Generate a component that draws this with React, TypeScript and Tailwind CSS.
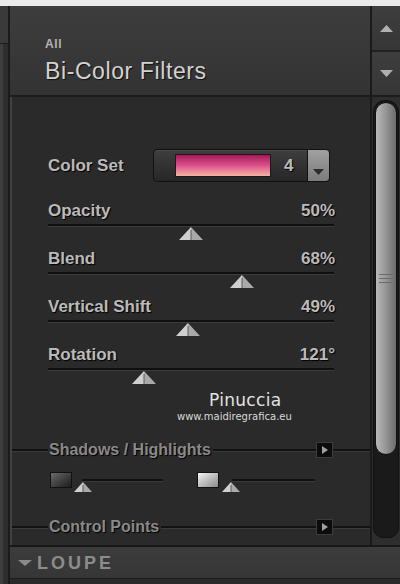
import React from "react";

const sliders = [
  { label: "Opacity", value: 50, max: 100, text: "50%" },
  { label: "Blend", value: 68, max: 100, text: "68%" },
  { label: "Vertical Shift", value: 49, max: 100, text: "49%" },
  { label: "Rotation", value: 121, max: 360, text: "121°" },
];

const TRACK = 286;

function Thumb({ w = 24, h = 13 }: { w?: number; h?: number }) {
  const c = w / 2;
  return (
    <svg width={w} height={h} viewBox={`0 0 ${w} ${h}`}>
      <polygon points={`${c},0 ${c},${h} 0,${h}`} fill="#cfcfcf" />
      <polygon points={`${c},0 ${w},${h} ${c},${h}`} fill="#a9a9a9" />
      <line x1={c} y1={3} x2={c} y2={h} stroke="#5a5a5a" strokeWidth={1} />
    </svg>
  );
}

function SectionButton() {
  return (
    <div className="w-[17px] h-[16px] bg-[#0c0c0c] border border-[#3c3c3c] flex items-center justify-center">
      <svg width="6" height="8" viewBox="0 0 6 8">
        <polygon points="0,0 6,4 0,8" fill="#a0a0a0" />
      </svg>
    </div>
  );
}

function SectionHeader({ title }: { title: string }) {
  return (
    <div className="flex items-center h-[18px]">
      <div className="w-[36px] h-[2px] bg-[#121212] shadow-[0_1px_0_#3a3a3a]" />
      <span className="ml-[1px] text-[16px] leading-[18px] font-bold text-[#898989] [text-shadow:1px_1px_1px_#000] whitespace-nowrap">
        {title}
      </span>
      <div className="flex-1 ml-[2px] h-[2px] bg-[#121212] shadow-[0_1px_0_#3a3a3a]" />
      <SectionButton />
      <div className="w-[37px] h-[2px] bg-[#121212] shadow-[0_1px_0_#3a3a3a]" />
    </div>
  );
}

function SliderBlock({ label, value, max, text }: { label: string; value: number; max: number; text: string }) {
  const left = Math.round((value / max) * TRACK) - 12;
  return (
    <div className="h-[48px] flex flex-col">
      <div className="flex justify-between h-[20px] leading-[20px] text-[17px] font-bold text-[#bababa] [text-shadow:1px_1px_1px_#000]">
        <span>{label}</span>
        <span className="mr-[-1px]">{text}</span>
      </div>
      <div className="mt-[3px] relative">
        <div className="h-[2px] bg-[#0f0f0f]" />
        <div className="h-[1px] bg-[#3d3d3d]" />
        <div className="absolute top-[3px]" style={{ left }}>
          <Thumb />
        </div>
      </div>
    </div>
  );
}

export default function App() {
  return (
    <div className="w-[400px] h-[584px] bg-[#2a2a2a] flex flex-col overflow-hidden font-['Liberation_Sans',Arial,sans-serif]">
      <div className="h-[6px] bg-[#ebebeb]" />
      <div className="flex flex-1 min-h-0">
        {/* left strip */}
        <div className="w-[10px] flex flex-col border-r-2 border-[#1b1b1b]">
          <div className="h-[38px] bg-[#3a3a3a] border-b border-[#1b1b1b]" />
          <div className="flex-1 bg-[#2e2e2e] border-l-[3px] border-[#3f3f3f]" />
        </div>

        <div className="flex-1 flex flex-col min-w-0">
          <div className="flex flex-1 min-h-0">
            {/* main panel */}
            <div className="w-[360px] flex flex-col">
              <div className="h-[91px] bg-gradient-to-b from-[#3d3d3d] to-[#333333] border-b-2 border-[#1c1c1c] pl-[35px] pt-[31px]">
                <div className="text-[12px] leading-[14px] font-bold text-[#b4b4b4] tracking-[0.6px]">All</div>
                <div className="mt-[7px] text-[23px] leading-[26px] text-[#d2d2d2] tracking-[0.6px] [text-shadow:1px_1px_1px_#111]">
                  Bi-Color Filters
                </div>
              </div>

              <div className="flex-1 relative bg-[#2a2a2a] border-l-2 border-[#424242] pt-[52px] flex flex-col">
                <div className="px-[36px]">
                  <div className="flex items-center h-[33px]">
                    <span className="w-[105px] text-[17px] font-bold leading-[20px] text-[#bababa] [text-shadow:1px_1px_1px_#000]">
                      Color Set
                    </span>
                    <div className="w-[177px] h-[33px] rounded-[4px] border border-[#111] bg-gradient-to-b from-[#3e3e3e] to-[#272727] flex items-center shadow-[inset_0_1px_0_#4a4a4a]">
                      <div className="ml-[21px] w-[96px] h-[23px] border border-[#1a1a1a] bg-gradient-to-b from-[#a8145a] via-[#dc4f8c] to-[#f2b4a2]" />
                      <span className="ml-[13px] text-[17px] font-bold text-[#bababa] [text-shadow:1px_1px_1px_#000]">4</span>
                      <div className="ml-auto w-[23px] h-[33px] -mr-px rounded-r-[4px] border border-[#111] bg-gradient-to-b from-[#a0a0a0] to-[#7c7c7c] flex items-end justify-center pb-[6px]">
                        <svg width="11" height="6" viewBox="0 0 11 6">
                          <polygon points="0,0 11,0 5.5,6" fill="#2c2c2c" />
                        </svg>
                      </div>
                    </div>
                  </div>
                  <div className="mt-[19px]">
                    {sliders.map((s) => (
                      <SliderBlock key={s.label} {...s} />
                    ))}
                  </div>
                </div>

                <div className="mt-[48px]">
                  <SectionHeader title="Shadows / Highlights" />
                </div>

                <div className="mt-[13px] h-[20px] flex pl-[38px]">
                  <div className="w-[22px] h-[16px] border border-[#111] bg-gradient-to-br from-[#6a6a6a] to-[#1e1e1e]" />
                  <div className="w-[93px] h-[20px] relative">
                    <div className="absolute top-[7px] left-[10px] right-[2px] h-[2px] bg-[#111] shadow-[0_1px_0_#3a3a3a]" />
                    <div className="absolute top-[10px] left-[2px]">
                      <Thumb w={18} h={10} />
                    </div>
                  </div>
                  <div className="ml-[32px] w-[22px] h-[16px] border border-[#111] bg-gradient-to-br from-[#f4f4f4] to-[#8a8a8a]" />
                  <div className="w-[96px] h-[20px] relative">
                    <div className="absolute top-[7px] left-[13px] right-0 h-[2px] bg-[#111] shadow-[0_1px_0_#3a3a3a]" />
                    <div className="absolute top-[10px] left-[3px]">
                      <Thumb w={18} h={10} />
                    </div>
                  </div>
                </div>

                <div className="mt-[26px]">
                  <SectionHeader title="Control Points" />
                </div>

                {/* watermark */}
                <div className="absolute left-[165px] top-[293px] flex flex-col items-start font-['DejaVu_Sans',sans-serif]">
                  <span className="ml-[32px] text-[17px] leading-[20px] text-[#e2e2e2] tracking-[0.3px]">Pinuccia</span>
                  <span className="mt-[1px] text-[10px] leading-[12px] text-[#d8d8d8]">www.maidiregrafica.eu</span>
                </div>
              </div>
            </div>

            {/* right column */}
            <div className="w-[30px] flex flex-col border-l-2 border-[#1a1a1a]">
              <div className="h-[46px] bg-gradient-to-b from-[#3e3e3e] to-[#363636] border-b-2 border-[#222] flex items-center justify-center">
                <svg width="13" height="7" viewBox="0 0 13 7">
                  <polygon points="6.5,0 13,7 0,7" fill="#b0b0b0" />
                </svg>
              </div>
              <div className="h-[45px] bg-gradient-to-b from-[#3e3e3e] to-[#363636] border-b-2 border-[#1c1c1c] flex items-center justify-center">
                <svg width="13" height="7" viewBox="0 0 13 7">
                  <polygon points="0,0 13,0 6.5,7" fill="#b0b0b0" />
                </svg>
              </div>
              <div className="flex-1 bg-[#2e2e2e] px-[1px] pt-[3px]">
                <div className="h-[438px] bg-[#1a1a1a] rounded-b-[10px] rounded-t-[12px] border border-[#111] p-[1px]">
                  <div className="h-[353px] rounded-[11px] border border-[#111] bg-gradient-to-r from-[#b8b8b8] via-[#959595] to-[#6c6c6c] flex flex-col justify-center items-center gap-[3px]">
                    <div className="w-[14px] h-[1px] bg-[#6a6a6a]" />
                    <div className="w-[14px] h-[1px] bg-[#6a6a6a]" />
                    <div className="w-[14px] h-[1px] bg-[#6a6a6a]" />
                  </div>
                </div>
              </div>
            </div>
          </div>

          {/* loupe */}
          <div className="h-[39px] border-t-2 border-[#171717] bg-[#2a2a2a] flex flex-col">
            <div className="h-[32px] bg-gradient-to-b from-[#3c3c3c] to-[#363636] border-b border-[#1c1c1c] flex items-center pl-[8px]">
              <svg width="14" height="6" viewBox="0 0 14 6">
                <polygon points="0,0 14,0 7,6" fill="#8a8a8a" />
              </svg>
              <span className="ml-[5px] text-[18px] leading-[20px] font-bold text-[#8c8c8c] tracking-[3px]">LOUPE</span>
            </div>
          </div>
        </div>
      </div>
    </div>
  );
}
